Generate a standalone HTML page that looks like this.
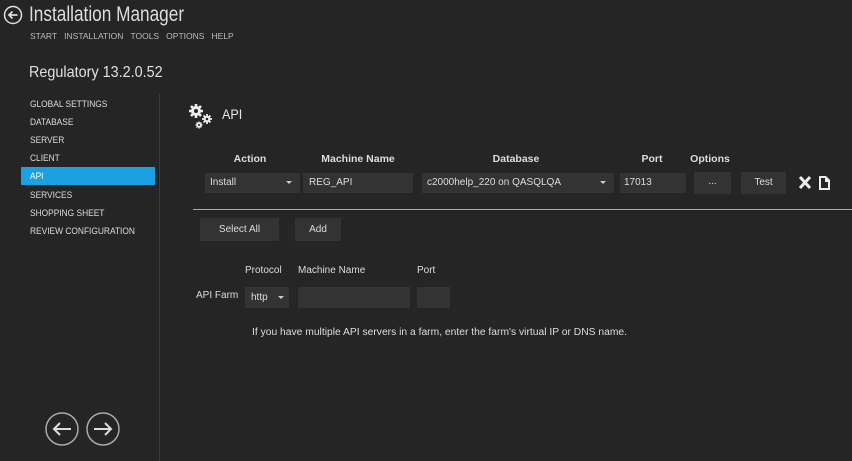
<!DOCTYPE html>
<html><head><style>
*{margin:0;padding:0;box-sizing:border-box}
body{width:852px;height:461px;background:#252525;color:#e6e6e6;font-family:"Liberation Sans",sans-serif;position:relative;overflow:hidden}
.a{position:absolute;white-space:nowrap}
.nav{font-size:9px;color:#ddd;left:30px;transform:scaleX(0.93);transform-origin:left}
.f{position:absolute;background:#333;height:20px;font-size:10px;line-height:20px;padding-left:6px;color:#ddd}
.h{position:absolute;font-size:10.5px;font-weight:bold;color:#ddd;top:153px;transform:translateX(-50%)}
.arr{position:absolute;right:8px;top:8px;border-left:3px solid transparent;border-right:3px solid transparent;border-top:3px solid #ccc}
.btn{position:absolute;background:#333;font-size:10px;color:#ddd;text-align:center}
</style></head><body>
<svg class="a" style="left:3px;top:5px" width="20" height="20" viewBox="0 0 20 20"><circle cx="10" cy="10" r="8.5" fill="none" stroke="#ddd" stroke-width="1.5"/><path d="M14.5 10H6M9.5 6.5L6 10l3.5 3.5" fill="none" stroke="#ddd" stroke-width="1.8"/></svg>
<div class="a" style="left:29px;top:3px;font-size:21px;color:#ddd;transform:scaleX(0.82);transform-origin:left">Installation Manager</div>
<div class="a" style="left:30px;top:31px;font-size:8.5px;color:#bbb;word-spacing:0">START&nbsp;&nbsp;&nbsp;INSTALLATION&nbsp;&nbsp;&nbsp;TOOLS&nbsp;&nbsp;&nbsp;OPTIONS&nbsp;&nbsp;&nbsp;HELP</div>
<div class="a" style="left:29px;top:64px;font-size:16px;color:#e0e0e0;transform:scaleX(0.9);transform-origin:left">Regulatory 13.2.0.52</div>
<div class="a" style="left:159px;top:94px;width:1px;height:367px;background:#3a3a3a"></div>
<div class="a" style="left:21px;top:167px;width:134px;height:18px;background:#1ba1e2"></div>
<div class="a nav" style="top:99px">GLOBAL SETTINGS</div>
<div class="a nav" style="top:117px">DATABASE</div>
<div class="a nav" style="top:135px">SERVER</div>
<div class="a nav" style="top:153px">CLIENT</div>
<div class="a nav" style="top:171px;color:#fff">API</div>
<div class="a nav" style="top:190px">SERVICES</div>
<div class="a nav" style="top:208px">SHOPPING SHEET</div>
<div class="a nav" style="top:226px">REVIEW CONFIGURATION</div>
<svg class="a" style="left:187px;top:102px" width="28" height="28" viewBox="0 0 28 28" fill="#eee">
<circle cx="9" cy="9" r="5"/><g stroke="#eee" stroke-width="2.6"><path d="M9 2v14M2 9h14M4 4l10 10M14 4L4 14"/></g><circle cx="9" cy="9" r="2" fill="#252525"/>
<circle cx="20" cy="17" r="3.3"/><g stroke="#eee" stroke-width="1.8"><path d="M20 12v10M15 17h10M16.5 13.5l7 7M23.5 13.5l-7 7"/></g><circle cx="20" cy="17" r="1.3" fill="#252525"/>
<circle cx="12" cy="23" r="2.5"/><g stroke="#eee" stroke-width="1.4"><path d="M12 19.5v7M8.5 23h7M9.5 20.5l5 5M14.5 20.5l-5 5"/></g><circle cx="12" cy="23" r="1" fill="#252525"/></svg>
<div class="a" style="left:222px;top:106px;font-size:14px;color:#e6e6e6;transform:scaleX(0.9);transform-origin:left">API</div>
<div class="h" style="left:250px">Action</div>
<div class="h" style="left:358px">Machine Name</div>
<div class="h" style="left:516px">Database</div>
<div class="h" style="left:652px">Port</div>
<div class="h" style="left:710px">Options</div>
<div class="f" style="left:205px;top:173px;width:95px;padding-left:5px">Install<span class="arr"></span></div>
<div class="f" style="left:303px;top:173px;width:110px">REG_API</div>
<div class="f" style="left:422px;top:173px;width:192px;padding-left:5px">c2000help_220 on QASQLQA<span class="arr"></span></div>
<div class="f" style="left:620px;top:173px;width:66px;padding-left:4px">17013</div>
<div class="btn" style="left:694px;top:172px;width:37px;height:22px;line-height:20px">...</div>
<div class="btn" style="left:741px;top:172px;width:45px;height:22px;line-height:22px">Test</div>
<svg class="a" style="left:798px;top:175px" width="36" height="16" viewBox="0 0 36 16"><path d="M2 2l10 11M12 2L2 13" stroke="#eee" stroke-width="3"/><path d="M21 1h7l4 4v10h-11z" fill="#eee"/><path d="M23 3h4v4h3v6h-7z" fill="#252525"/></svg>
<div class="a" style="left:193px;top:209px;width:659px;height:1px;background:#aaa"></div>
<div class="btn" style="left:200px;top:218px;width:79px;height:23px;line-height:23px">Select All</div>
<div class="btn" style="left:295px;top:218px;width:46px;height:23px;line-height:23px">Add</div>
<div class="a" style="left:245px;top:265px;font-size:10px;color:#ddd">Protocol</div>
<div class="a" style="left:298px;top:265px;font-size:10px;color:#ddd">Machine Name</div>
<div class="a" style="left:417px;top:265px;font-size:10px;color:#ddd">Port</div>
<div class="a" style="left:196px;top:290px;font-size:10px;color:#ddd">API Farm</div>
<div class="f" style="left:245px;top:287px;width:44px;height:21px;padding-left:6px;line-height:22px">http<span class="arr" style="right:5px;top:9px"></span></div>
<div class="f" style="left:298px;top:287px;width:112px;height:21px"></div>
<div class="f" style="left:417px;top:287px;width:33px;height:21px"></div>
<div class="a" style="left:252px;top:327px;font-size:10px;color:#ddd;transform:scaleX(1.03);transform-origin:left">If you have multiple API servers in a farm, enter the farm's virtual IP or DNS name.</div>
<svg class="a" style="left:44px;top:411px" width="80" height="36" viewBox="0 0 80 36"><circle cx="18" cy="18" r="16" fill="none" stroke="#aaa" stroke-width="1.5"/><path d="M27 18H10M16 12l-6 6 6 6" fill="none" stroke="#ddd" stroke-width="2"/><circle cx="59" cy="18" r="16" fill="none" stroke="#aaa" stroke-width="1.5"/><path d="M50 18h17M61 12l6 6-6 6" fill="none" stroke="#ddd" stroke-width="2"/></svg>
</body></html>
